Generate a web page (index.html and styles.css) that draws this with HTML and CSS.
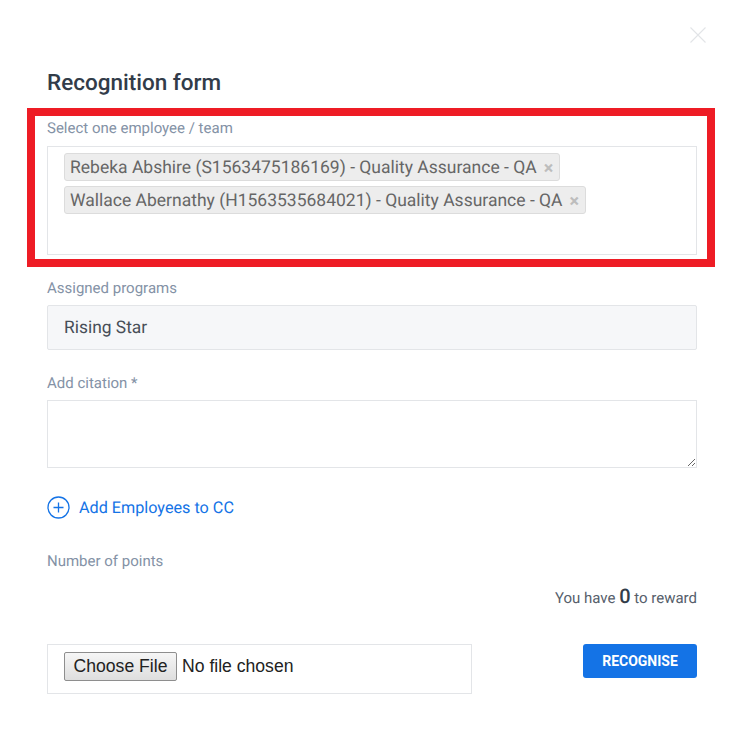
FILE: index.html
```html
<!DOCTYPE html>
<html lang="en">
<head>
<meta charset="utf-8">
<title>Recognition form</title>
<link rel="stylesheet" href="styles.css">
</head>
<body>
<main class="modal">
  <div class="close-row">
    <svg class="close" width="16" height="16" viewBox="0 0 16 16" aria-hidden="true"><path d="M.5.5l15 15M15.5.5l-15 15" fill="none" stroke="#e2e4e7" stroke-width="1.1"/></svg>
  </div>
  <h1 class="title">Recognition form</h1>
  <section class="highlight">
    <label class="label label-first">Select one employee / team</label>
    <div class="tagbox">
      <span class="tag">Rebeka Abshire (S1563475186169) - Quality Assurance - QA<span class="tag-x">×</span></span>
      <span class="tag">Wallace Abernathy (H1563535684021) - Quality Assurance - QA<span class="tag-x">×</span></span>
    </div>
  </section>
  <label class="label label-programs">Assigned programs</label>
  <div class="readonly">Rising Star</div>
  <label class="label label-citation">Add citation *</label>
  <textarea class="citation"></textarea>
  <a class="add-cc" href="#">
    <svg width="23" height="23" viewBox="0 0 23 23" aria-hidden="true"><circle cx="11.5" cy="11.5" r="10.5" fill="none" stroke="#1473e6" stroke-width="1.3"/><path d="M11.5 6.5v10M6.5 11.5h10" fill="none" stroke="#1473e6" stroke-width="1.3"/></svg>
    <span>Add Employees to CC</span>
  </a>
  <label class="label label-points">Number of points</label>
  <p class="balance">You have <strong>0</strong> to reward</p>
  <div class="footer">
    <div class="filebox"><input class="file" type="file"></div>
    <button class="submit" type="button">RECOGNISE</button>
  </div>
</main>
</body>
</html>
```
FILE: styles.css
```css
* { box-sizing: border-box; }
html, body { margin: 0; padding: 0; background: #fff; }
body { font-family: Roboto, "Liberation Sans", sans-serif; overflow: hidden; text-rendering: geometricPrecision; }
.modal { width: 744px; height: 733px; padding: 27px 47px 0; display: flex; flex-direction: column; }
.close-row { display: flex; justify-content: flex-end; height: 18px; margin-right: -9px; }
.title { margin: 19px 0 0; font-size: 22.5px; font-weight: 500; line-height: 38px; color: #323c49; }
.highlight { margin: 6px -18px 0 -20px; border: 8px solid #ee1c25; height: 159px; padding: 0 10px 0 12px; }
.label { display: block; font-size: 15px; line-height: 20px; color: #8492a6; }
.label-first { margin-top: 2px; }
.tagbox { margin-top: 8px; height: 109px; border: 1px solid #e3e5e8; padding: 6px 16px; display: flex; flex-direction: column; align-items: flex-start; gap: 5px; }
.tag { display: inline-flex; align-items: center; height: 28px; padding: 1px 6px 0 5px; background: #ededed; border: 1px solid #dcdcdc; border-radius: 3px; font-size: 17.5px; color: #666; white-space: nowrap; }
.tag-x { margin-left: 7px; margin-top: 2px; font-size: 18px; color: #bdbdbd; font-weight: 700; }
.label-programs { margin-top: 11px; }
.readonly { margin-top: 7px; height: 45px; background: #f6f7f9; border: 1px solid #e3e5e8; border-radius: 2px; padding: 2px 16px 0; font-size: 17.4px; line-height: 41px; color: #474e57; }
.label-citation { margin-top: 23px; }
.citation { display: block; margin-top: 7px; width: 650px; height: 68px; border: 1px solid #e3e5e8; border-radius: 0; outline: none; background: #fff; }
.add-cc { display: flex; align-items: center; gap: 9px; margin-top: 28px; height: 23px; color: #1473e6; font-size: 16.2px; text-decoration: none; }
.label-points { margin-top: 32px; }
.balance { margin: 12px 0 0; text-align: right; font-size: 15px; line-height: 26px; color: #565e6b; }
.balance strong { font-size: 20px; font-weight: 500; color: #323c49; }
.footer { display: flex; justify-content: space-between; align-items: flex-start; margin-top: 33px; }
.filebox { width: 425px; height: 50px; border: 1px solid #e3e5e8; padding: 7px 16px; }
.file { font-family: "Liberation Sans", sans-serif; font-size: 17.6px; color: #222; width: 390px; }
.file::file-selector-button { font: inherit; height: 29px; width: 113px; padding: 0; margin-right: 5px; background: linear-gradient(#f6f6f6, #dedede); border: 1px solid #8e8e8e; border-radius: 2px; color: #222; }
.submit { width: 114px; height: 34px; padding: 0; border: 0; border-radius: 3px; background: #1473e6; color: #fff; font-family: Roboto, sans-serif; font-size: 14px; font-weight: 700; }
```
